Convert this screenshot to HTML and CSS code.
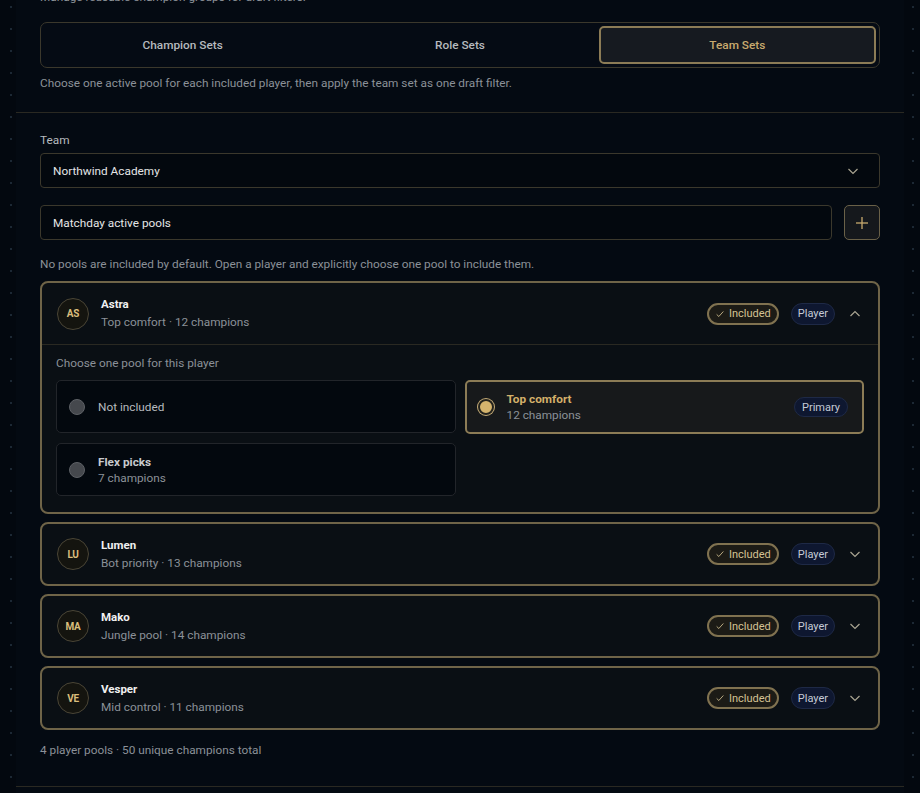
FILE: index.html
```html
<!DOCTYPE html>
<html lang="en">
<head>
    <meta charset="UTF-8">
    <meta name="viewport" content="width=device-width, initial-scale=1.0">
    <title>Team Sets</title>
    <link rel="stylesheet" href="styles.css">
</head>
<body>
    <div class="sheet">
        <section class="sheet-section intro">
            <p class="lead">Manage reusable champion groups for draft filters.</p>
            <div class="tabs">
                <button class="tab">Champion Sets</button>
                <button class="tab">Role Sets</button>
                <button class="tab active">Team Sets</button>
            </div>
            <p class="hint">Choose one active pool for each included player, then apply the team set as one draft filter.</p>
        </section>

        <section class="sheet-section editor">
            <label class="field-label">Team</label>
            <div class="select">
                <span>Northwind Academy</span>
                <svg class="chev" viewBox="0 0 16 16"><polyline points="3.5,6 8,10.5 12.5,6"/></svg>
            </div>

            <div class="name-row">
                <div class="text-input">Matchday active pools</div>
                <button class="add-btn">
                    <svg viewBox="0 0 16 16"><line x1="8" y1="2" x2="8" y2="14"/><line x1="2" y1="8" x2="14" y2="8"/></svg>
                </button>
            </div>

            <p class="note">No pools are included by default. Open a player and explicitly choose one pool to include them.</p>

            <div class="player-list">
                <div class="player open">
                    <div class="player-head">
                        <span class="avatar">AS</span>
                        <div class="player-info">
                            <span class="player-name">Astra</span>
                            <span class="player-sub">Top comfort · 12 champions</span>
                        </div>
                        <div class="player-tags">
                            <span class="pill included"><svg viewBox="0 0 12 12"><polyline points="2,6.5 4.6,9 10,3"/></svg>Included</span>
                            <span class="pill navy">Player</span>
                            <svg class="chev" viewBox="0 0 16 16"><polyline points="3.5,10 8,5.5 12.5,10"/></svg>
                        </div>
                    </div>
                    <div class="player-body">
                        <p class="body-label">Choose one pool for this player</p>
                        <div class="pool-grid">
                            <div class="pool">
                                <span class="radio"></span>
                                <div class="pool-text">
                                    <span class="pool-plain">Not included</span>
                                </div>
                            </div>
                            <div class="pool selected">
                                <span class="radio"></span>
                                <div class="pool-text">
                                    <span class="pool-title">Top comfort</span>
                                    <span class="pool-sub">12 champions</span>
                                </div>
                                <span class="pill navy small">Primary</span>
                            </div>
                            <div class="pool">
                                <span class="radio"></span>
                                <div class="pool-text">
                                    <span class="pool-title">Flex picks</span>
                                    <span class="pool-sub">7 champions</span>
                                </div>
                            </div>
                        </div>
                    </div>
                </div>

                <div class="player">
                    <div class="player-head">
                        <span class="avatar">LU</span>
                        <div class="player-info">
                            <span class="player-name">Lumen</span>
                            <span class="player-sub">Bot priority · 13 champions</span>
                        </div>
                        <div class="player-tags">
                            <span class="pill included"><svg viewBox="0 0 12 12"><polyline points="2,6.5 4.6,9 10,3"/></svg>Included</span>
                            <span class="pill navy">Player</span>
                            <svg class="chev" viewBox="0 0 16 16"><polyline points="3.5,6 8,10.5 12.5,6"/></svg>
                        </div>
                    </div>
                </div>

                <div class="player">
                    <div class="player-head">
                        <span class="avatar">MA</span>
                        <div class="player-info">
                            <span class="player-name">Mako</span>
                            <span class="player-sub">Jungle pool · 14 champions</span>
                        </div>
                        <div class="player-tags">
                            <span class="pill included"><svg viewBox="0 0 12 12"><polyline points="2,6.5 4.6,9 10,3"/></svg>Included</span>
                            <span class="pill navy">Player</span>
                            <svg class="chev" viewBox="0 0 16 16"><polyline points="3.5,6 8,10.5 12.5,6"/></svg>
                        </div>
                    </div>
                </div>

                <div class="player">
                    <div class="player-head">
                        <span class="avatar">VE</span>
                        <div class="player-info">
                            <span class="player-name">Vesper</span>
                            <span class="player-sub">Mid control · 11 champions</span>
                        </div>
                        <div class="player-tags">
                            <span class="pill included"><svg viewBox="0 0 12 12"><polyline points="2,6.5 4.6,9 10,3"/></svg>Included</span>
                            <span class="pill navy">Player</span>
                            <svg class="chev" viewBox="0 0 16 16"><polyline points="3.5,6 8,10.5 12.5,6"/></svg>
                        </div>
                    </div>
                </div>
            </div>

            <p class="summary">4 player pools · 50 unique champions total</p>
        </section>
    </div>
</body>
</html>
```

FILE: styles.css
```css
/* --- palette --- */
:root {
    --bg-page: #03080f;
    --bg-sheet: #040a12;
    --bg-card: #0a0f14;
    --bg-field: #03080e;
    --line: #2a2922;
    --line-field: #3b382c;
    --gold: #c8aa6e;
    --gold-line: #6f6448;
    --text: #e4e5e6;
    --text-soft: #b6babe;
    --text-muted: #8b9198;
    --navy: #0e1730;
    --navy-line: #1e2946;
}

* {
    box-sizing: border-box;
}

body {
    margin: 0;
    background-color: var(--bg-page);
    background-image: radial-gradient(circle at 11px 7px, #1c2834 0.9px, transparent 1.4px);
    background-size: 22px 22px;
    font-family: Roboto, "Liberation Sans", sans-serif;
    font-size: 11.8px;
    color: var(--text);
}

p {
    margin: 0;
}

button {
    font: inherit;
    cursor: pointer;
}

.sheet {
    margin: -11px 16px 0;
    background: var(--bg-sheet);
    min-height: 820px;
}

.sheet-section {
    padding: 0 24px;
}

.intro {
    padding-bottom: 21px;
}

.lead,
.hint,
.note,
.summary,
.body-label {
    line-height: 16px;
    color: var(--text-muted);
}

/* tabs */
.tabs {
    margin-top: 17px;
    height: 46px;
    padding: 3px;
    display: grid;
    grid-template-columns: 1fr 1fr 1fr;
    border: 1px solid var(--line-field);
    border-radius: 7px;
    background: #050b14;
}

.tab {
    border: 2px solid transparent;
    border-radius: 5px;
    background: none;
    color: var(--text-soft);
    font-weight: 500;
}

.tab.active {
    background: #161a20;
    border-color: #8c7c56;
    color: var(--gold);
}

.hint {
    margin-top: 7px;
}

/* editor */
.editor {
    border-top: 1px solid var(--line);
    border-bottom: 1px solid var(--line);
    padding-top: 19px;
    padding-bottom: 28px;
}

.field-label {
    display: block;
    line-height: 16px;
    color: var(--text-soft);
    margin-bottom: 5px;
}

.select,
.text-input {
    height: 35px;
    display: flex;
    align-items: center;
    justify-content: space-between;
    padding: 0 18px 0 12px;
    border: 1px solid var(--line-field);
    border-radius: 4px;
    background: var(--bg-field);
    color: var(--text);
}

.chev {
    width: 16px;
    height: 16px;
    fill: none;
    stroke: #aaa592;
    stroke-width: 1.2;
}

.name-row {
    margin-top: 17px;
    display: flex;
    gap: 12px;
}

.text-input {
    flex: 1;
}

.add-btn {
    width: 36px;
    height: 35px;
    padding: 0;
    display: flex;
    align-items: center;
    justify-content: center;
    border: 1px solid #6a6148;
    border-radius: 5px;
    background: #15181c;
}

.add-btn svg {
    width: 16px;
    height: 16px;
    stroke: var(--gold);
    stroke-width: 1.3;
}

.note {
    margin-top: 16px;
}

/* players */
.player-list {
    margin-top: 9px;
    display: flex;
    flex-direction: column;
    gap: 8px;
}

.player {
    border: 2px solid var(--gold-line);
    border-radius: 8px;
    background: var(--bg-card);
}

.player-head {
    height: 60px;
    padding: 0 15px;
    display: flex;
    align-items: center;
    gap: 12px;
}

.player.open .player-head {
    height: 62px;
    border-bottom: 1px solid var(--line);
}

.avatar {
    width: 32px;
    height: 32px;
    flex: none;
    display: flex;
    align-items: center;
    justify-content: center;
    border: 1px solid #4a4536;
    border-radius: 50%;
    background: #14140f;
    color: #d9bd7c;
    font-size: 10px;
    font-weight: 700;
    letter-spacing: -0.3px;
}

.player-info {
    flex: 1;
    display: flex;
    flex-direction: column;
    gap: 1px;
}

.player-name {
    line-height: 16px;
    font-weight: 700;
    font-size: 11.5px;
    color: #f0f0f0;
}

.player-sub {
    line-height: 18px;
    color: var(--text-muted);
}

.player-tags {
    display: flex;
    align-items: center;
    gap: 12px;
}

.pill {
    height: 22px;
    display: inline-flex;
    align-items: center;
    gap: 4px;
    padding: 0 6px;
    border-radius: 11px;
    font-size: 11px;
}

.pill.included {
    border: 2px solid #807250;
    background: #1c1b16;
    color: #d4c293;
}

.pill.included svg {
    width: 10px;
    height: 10px;
    fill: none;
    stroke: #c6b68a;
    stroke-width: 1.1;
}

.pill.navy {
    border: 1px solid var(--navy-line);
    background: var(--navy);
    color: #c4cad6;
}

.pill.small {
    height: 20px;
    border-radius: 10px;
    padding: 0 7px;
}

.player-body {
    padding: 10px 14px 16px;
}

.body-label {
    margin-bottom: 9px;
}

.pool-grid {
    display: grid;
    grid-template-columns: 1fr 1fr;
    gap: 9px 9px;
}

.pool {
    height: 53px;
    display: flex;
    align-items: center;
    gap: 13px;
    padding: 0 14px 0 12px;
    border: 1px solid #22252a;
    border-radius: 5px;
    background: var(--bg-field);
}

.pool.selected {
    height: 54px;
    border: 2px solid #8c7c56;
    background: #17191b;
    padding-left: 11px;
}

.radio {
    width: 16px;
    height: 16px;
    flex: none;
    border-radius: 50%;
    border: 1px solid #5e6166;
    background: #45484d;
}

.pool.selected .radio {
    border: 2px solid #24231d;
    background: #d5b46d;
    box-shadow: 0 0 0 1px #c4ab77;
}

.pool-text {
    flex: 1;
    display: flex;
    flex-direction: column;
}

.pool-plain {
    color: var(--text-soft);
}

.pool-title {
    line-height: 16px;
    font-weight: 700;
    color: #c7cacd;
}

.pool.selected .pool-title {
    color: #d4b06a;
}

.pool-sub {
    line-height: 16px;
    color: var(--text-muted);
}

.summary {
    margin-top: 12px;
}
```
